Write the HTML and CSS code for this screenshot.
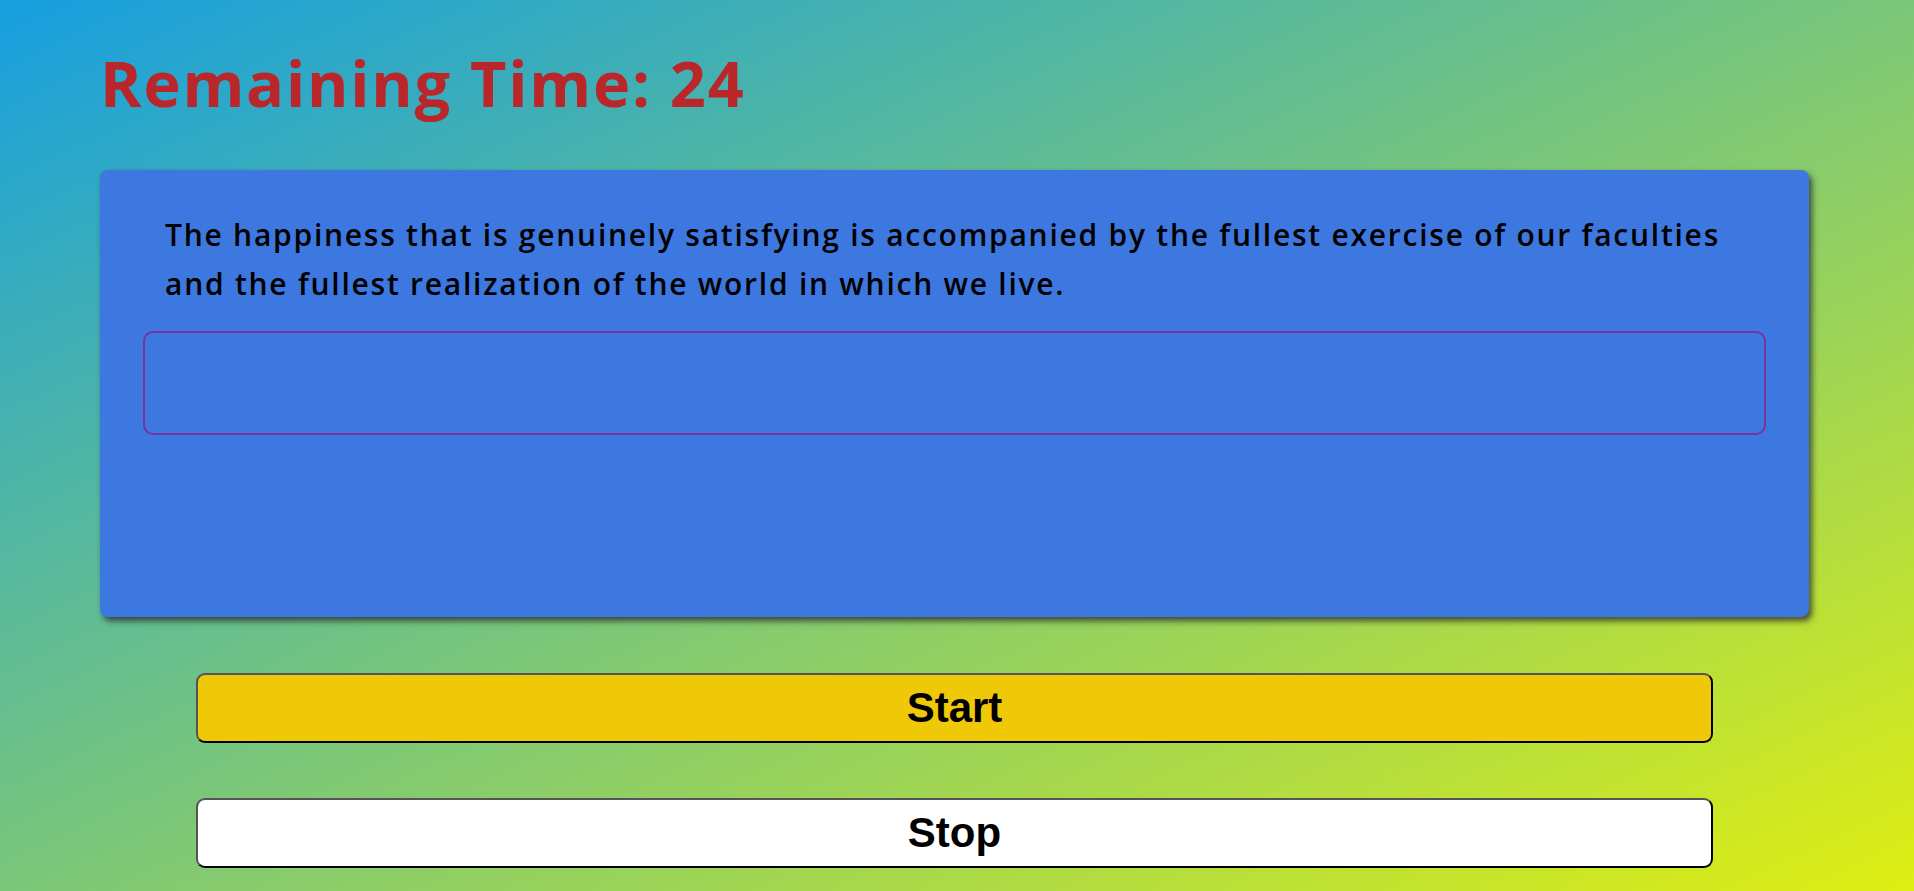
FILE: index.html
```html
<!DOCTYPE html>
<html lang="en">
<head>
<meta charset="utf-8">
<title>Typing Test</title>
<link rel="stylesheet" href="styles.css">
</head>
<body>
<main class="page">
  <h1 class="timer">Remaining Time: 24</h1>
  <section class="card">
    <p class="quote">The happiness that is genuinely satisfying is accompanied by the fullest exercise of our faculties and the fullest realization of the world in which we live.</p>
    <textarea class="typing-input" aria-label="Type here"></textarea>
    <div class="result"></div>
  </section>
  <div class="controls">
    <button class="btn btn-start" type="button">Start</button>
    <button class="btn btn-stop" type="button">Stop</button>
  </div>
</main>
</body>
</html>
```

FILE: styles.css
```css
html, body {
  margin: 0;
  height: 100%;
}

body {
  background: linear-gradient(to bottom right, #169fe0, #dfee12);
  font-family: "Open Sans", "Liberation Sans", sans-serif;
}

.page {
  padding: 0 105px 0 100px;
  display: flex;
  flex-direction: column;
}

.timer {
  margin: 0;
  padding-top: 41px;
  height: 128px;
  box-sizing: border-box;
  font-size: 63px;
  line-height: 84px;
  font-weight: 700;
  color: #b9272a;
  letter-spacing: 1.8px;
}

.card {
  background: #3d78e0;
  border-radius: 8px;
  box-shadow: 3px 4px 6px rgba(40, 40, 40, 0.8);
  padding: 40px 43px 0 43px;
  height: 447px;
  box-sizing: border-box;
  margin-top: 42px;
  display: flex;
  flex-direction: column;
}

.quote {
  margin: 0;
  padding: 0 22px;
  font-size: 30px;
  line-height: 49px;
  font-weight: 600;
  letter-spacing: 1.75px;
  color: #000;
}

.typing-input {
  margin-top: 23px;
  height: 104px;
  box-sizing: border-box;
  background: transparent;
  border: 2px solid #7b3299;
  border-radius: 10px;
  resize: none;
  outline: none;
}

.controls {
  display: flex;
  flex-direction: column;
  gap: 55px;
  padding: 56px 96px 0 96px;
}

.btn {
  height: 70px;
  border-radius: 9px;
  border: 2px solid;
  border-color: #555 #000 #000 #555;
  font-family: "Liberation Sans", Arial, sans-serif;
  font-size: 42px;
  font-weight: 700;
  color: #000;
  padding: 0;
}

.btn-start {
  background: #efc807;
}

.btn-stop {
  background: #ffffff;
}
```
